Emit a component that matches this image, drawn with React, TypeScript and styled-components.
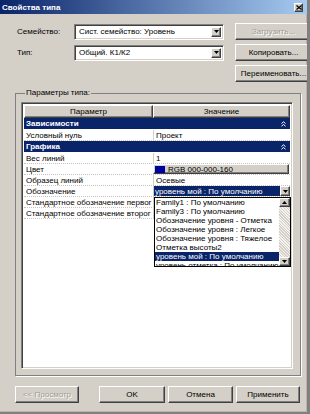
import React from "react";
import styled, { createGlobalStyle, css } from "styled-components";

const GlobalStyle = createGlobalStyle`
  html, body {
    margin: 0;
    padding: 0;
    background: #d4d0c8;
  }
  * {
    box-sizing: border-box;
  }
`;

const raised = css`
  background: #d4d0c8;
  border: 1px solid;
  border-color: #ffffff #404040 #404040 #ffffff;
  box-shadow: inset -1px -1px 0 #808080;
`;

const sunken = css`
  border: 1px solid;
  border-color: #808080 #ffffff #ffffff #808080;
  box-shadow: inset 1px 1px 0 #404040, inset -1px -1px 0 #d4d0c8;
`;

const Window = styled.div`
  width: 310px;
  height: 414px;
  background: #d4d0c8;
  border-right: 3px solid;
  border-bottom: 2px solid;
  border-color: #808080;
  box-shadow: inset -1px -1px 0 #b8b4ac;
  display: flex;
  flex-direction: column;
  font-family: "Liberation Sans", Arial, sans-serif;
  font-size: 8px;
  color: #000;
  overflow: hidden;
`;

const TitleBar = styled.div`
  height: 14px;
  flex: none;
  display: flex;
  align-items: center;
  justify-content: space-between;
  padding: 0 4px 0 2px;
  background: linear-gradient(to right, #0a246a, #a6caf0);
  color: #fff;
  font-weight: bold;
  font-size: 8px;
`;

const CloseButton = styled.div`
  ${raised};
  width: 9px;
  height: 9px;
  display: flex;
  align-items: center;
  justify-content: center;
`;

const Body = styled.div`
  flex: 1;
  display: flex;
  flex-direction: column;
  padding: 9px 6px 0 15px;
`;

const TopGrid = styled.div`
  display: grid;
  grid-template-columns: 46px 150px 77px;
  grid-auto-rows: 17px;
  column-gap: 11px;
  row-gap: 4px;
  margin-left: 2px;
  align-items: center;
`;

const Label = styled.div`
  white-space: nowrap;
`;

const Combo = styled.div`
  ${sunken};
  background: #fff;
  height: 16px;
  display: flex;
  align-items: stretch;
  padding: 2px;
`;

const ComboText = styled.div`
  flex: 1;
  padding-left: 2px;
  display: flex;
  align-items: center;
  white-space: nowrap;
  overflow: hidden;
`;

const ArrowButton = styled.div<{ $w?: number }>`
  ${raised};
  width: ${(p) => p.$w ?? 10}px;
  flex: none;
  display: flex;
  align-items: center;
  justify-content: center;
`;

const Button = styled.div<{ $disabled?: boolean; $w?: number }>`
  ${raised};
  height: 17px;
  width: ${(p) => (p.$w ? `${p.$w}px` : "auto")};
  display: flex;
  align-items: center;
  justify-content: center;
  white-space: nowrap;
  color: ${(p) => (p.$disabled ? "#a09c94" : "#000")};
  text-shadow: ${(p) => (p.$disabled ? "1px 1px 0 #fff" : "none")};
`;

const Group = styled.fieldset`
  margin: 6px 0 0 0;
  padding: 4px 7px 6px 5px;
  border: 1px solid #808080;
  box-shadow: 1px 1px 0 #fff;
  min-width: 0;
`;

const Legend = styled.legend`
  padding: 0 1px;
  margin-left: 4px;
  font-size: 8px;
  line-height: 10px;
`;

const Table = styled.div`
  ${sunken};
  background: #fff;
  height: 267px;
  padding: 2px;
  position: relative;
  display: flex;
  flex-direction: column;
`;

const HeaderRow = styled.div`
  display: grid;
  grid-template-columns: 129px 1fr;
  height: 13px;
  flex: none;
`;

const HeaderCell = styled.div`
  ${raised};
  display: flex;
  align-items: center;
  justify-content: center;
`;

const Section = styled.div`
  height: 12px;
  flex: none;
  background: #0a246a;
  color: #fff;
  font-weight: bold;
  font-size: 8px;
  display: flex;
  align-items: center;
  justify-content: space-between;
  padding: 0 4px 0 2px;
  border-bottom: 1px solid #fff;
`;

const Row = styled.div`
  display: grid;
  grid-template-columns: 129px 1fr;
  height: 11px;
  flex: none;
  border-bottom: 1px dotted #c8c4bc;
`;

const Cell = styled.div`
  padding-left: 2px;
  display: flex;
  align-items: center;
  white-space: nowrap;
  overflow: hidden;
  & + & {
    border-left: 1px solid #d4d0c8;
  }
`;

const ColorValue = styled.div`
  ${raised};
  display: flex;
  align-items: center;
  gap: 3px;
  padding-left: 1px;
  margin-right: 1px;
  white-space: nowrap;
  overflow: hidden;
`;

const Swatch = styled.span`
  width: 10px;
  height: 7px;
  background: #0000a0;
  flex: none;
`;

const SelectedValue = styled.div`
  display: flex;
  align-items: stretch;
  border-left: 1px solid #d4d0c8;
`;

const SelectedText = styled.div`
  flex: 1;
  background: #0a246a;
  color: #fff;
  padding-left: 1px;
  display: flex;
  align-items: center;
  white-space: nowrap;
  overflow: hidden;
`;

const DropList = styled.div`
  position: absolute;
  left: 132px;
  right: 1px;
  top: 94px;
  height: 70px;
  background: #fff;
  border: 1px solid #000;
  display: flex;
  overflow: hidden;
`;

const Items = styled.div`
  flex: 1;
  display: flex;
  flex-direction: column;
  overflow: hidden;
`;

const Item = styled.div<{ $active?: boolean }>`
  height: 9px;
  flex: none;
  padding-left: 1px;
  line-height: 9px;
  white-space: nowrap;
  background: ${(p) => (p.$active ? "#0a246a" : "transparent")};
  color: ${(p) => (p.$active ? "#fff" : "#000")};
`;

const ScrollBar = styled.div`
  width: 11px;
  flex: none;
  display: flex;
  flex-direction: column;
  background-color: #ece9e4;
  background-image: repeating-linear-gradient(45deg, #d4d0c8 0 1px, #f4f2ee 1px 2px);
`;

const ScrollButton = styled.div`
  ${raised};
  height: 9px;
  flex: none;
  display: flex;
  align-items: center;
  justify-content: center;
`;

const ScrollTrack = styled.div`
  flex: 1;
`;

const Footer = styled.div`
  display: flex;
  align-items: center;
  gap: 3px;
  margin-top: 10px;
  padding-right: 1px;
`;

const Spacer = styled.div`
  flex: 1;
`;

const Down = () => (
  <svg width="5" height="3" viewBox="0 0 5 3">
    <path d="M0 0h5L2.5 3z" fill="#000" />
  </svg>
);

const Up = () => (
  <svg width="5" height="3" viewBox="0 0 5 3">
    <path d="M0 3h5L2.5 0z" fill="#000" />
  </svg>
);

const Collapse = () => (
  <svg width="5" height="6" viewBox="0 0 5 6">
    <path d="M0.5 2.5L2.5 0.8L4.5 2.5M0.5 5.2L2.5 3.5L4.5 5.2" stroke="#fff" strokeWidth="1" fill="none" />
  </svg>
);

const Close = () => (
  <svg width="6" height="5" viewBox="0 0 6 5">
    <path d="M0.5 0.5L5.5 4.5M5.5 0.5L0.5 4.5" stroke="#000" strokeWidth="1.2" />
  </svg>
);

const listItems = [
  "Family1 : По умолчанию",
  "Family3 : По умолчанию",
  "Обозначение уровня - Отметка",
  "Обозначение уровня : Легкое",
  "Обозначение уровня : Тяжелое",
  "Отметка высоты2",
  "уровень мой : По умолчанию",
  "уровень отметка : По умолчанию",
];

export default function App() {
  return (
    <>
      <GlobalStyle />
      <Window>
        <TitleBar>
          Свойства типа
          <CloseButton>
            <Close />
          </CloseButton>
        </TitleBar>
        <Body>
          <TopGrid>
            <Label>Семейство:</Label>
            <Combo>
              <ComboText>Сист. семейство: Уровень</ComboText>
              <ArrowButton>
                <Down />
              </ArrowButton>
            </Combo>
            <Button $disabled>Загрузить...</Button>
            <Label>Тип:</Label>
            <Combo>
              <ComboText>Общий. К1/К2</ComboText>
              <ArrowButton>
                <Down />
              </ArrowButton>
            </Combo>
            <Button>Копировать...</Button>
            <span />
            <span />
            <Button>Переименовать...</Button>
          </TopGrid>
          <Group>
            <Legend>Параметры типа:</Legend>
            <Table>
              <HeaderRow>
                <HeaderCell>Параметр</HeaderCell>
                <HeaderCell>Значение</HeaderCell>
              </HeaderRow>
              <Section>
                Зависимости
                <Collapse />
              </Section>
              <Row>
                <Cell>Условный нуль</Cell>
                <Cell>Проект</Cell>
              </Row>
              <Section>
                Графика
                <Collapse />
              </Section>
              <Row>
                <Cell>Вес линий</Cell>
                <Cell>1</Cell>
              </Row>
              <Row>
                <Cell>Цвет</Cell>
                <ColorValue>
                  <Swatch />
                  RGB 000-000-160
                </ColorValue>
              </Row>
              <Row>
                <Cell>Образец линий</Cell>
                <Cell>Осевые</Cell>
              </Row>
              <Row>
                <Cell>Обозначение</Cell>
                <SelectedValue>
                  <SelectedText>уровень мой : По умолчанию</SelectedText>
                  <ArrowButton $w={10}>
                    <Down />
                  </ArrowButton>
                </SelectedValue>
              </Row>
              <Row>
                <Cell>Стандартное обозначение первог</Cell>
                <Cell />
              </Row>
              <Row>
                <Cell>Стандартное обозначение второг</Cell>
                <Cell />
              </Row>
              <DropList>
                <Items>
                  {listItems.map((t) => (
                    <Item key={t} $active={t === "уровень мой : По умолчанию"}>
                      {t}
                    </Item>
                  ))}
                </Items>
                <ScrollBar>
                  <ScrollButton>
                    <Up />
                  </ScrollButton>
                  <ScrollTrack />
                  <ScrollButton>
                    <Down />
                  </ScrollButton>
                </ScrollBar>
              </DropList>
            </Table>
          </Group>
          <Footer>
            <Button $disabled $w={64}>
              &lt;&lt; Просмотр
            </Button>
            <Spacer />
            <Button $w={66}>OK</Button>
            <Button $w={65}>Отмена</Button>
            <Button $w={64}>Применить</Button>
          </Footer>
        </Body>
      </Window>
    </>
  );
}
